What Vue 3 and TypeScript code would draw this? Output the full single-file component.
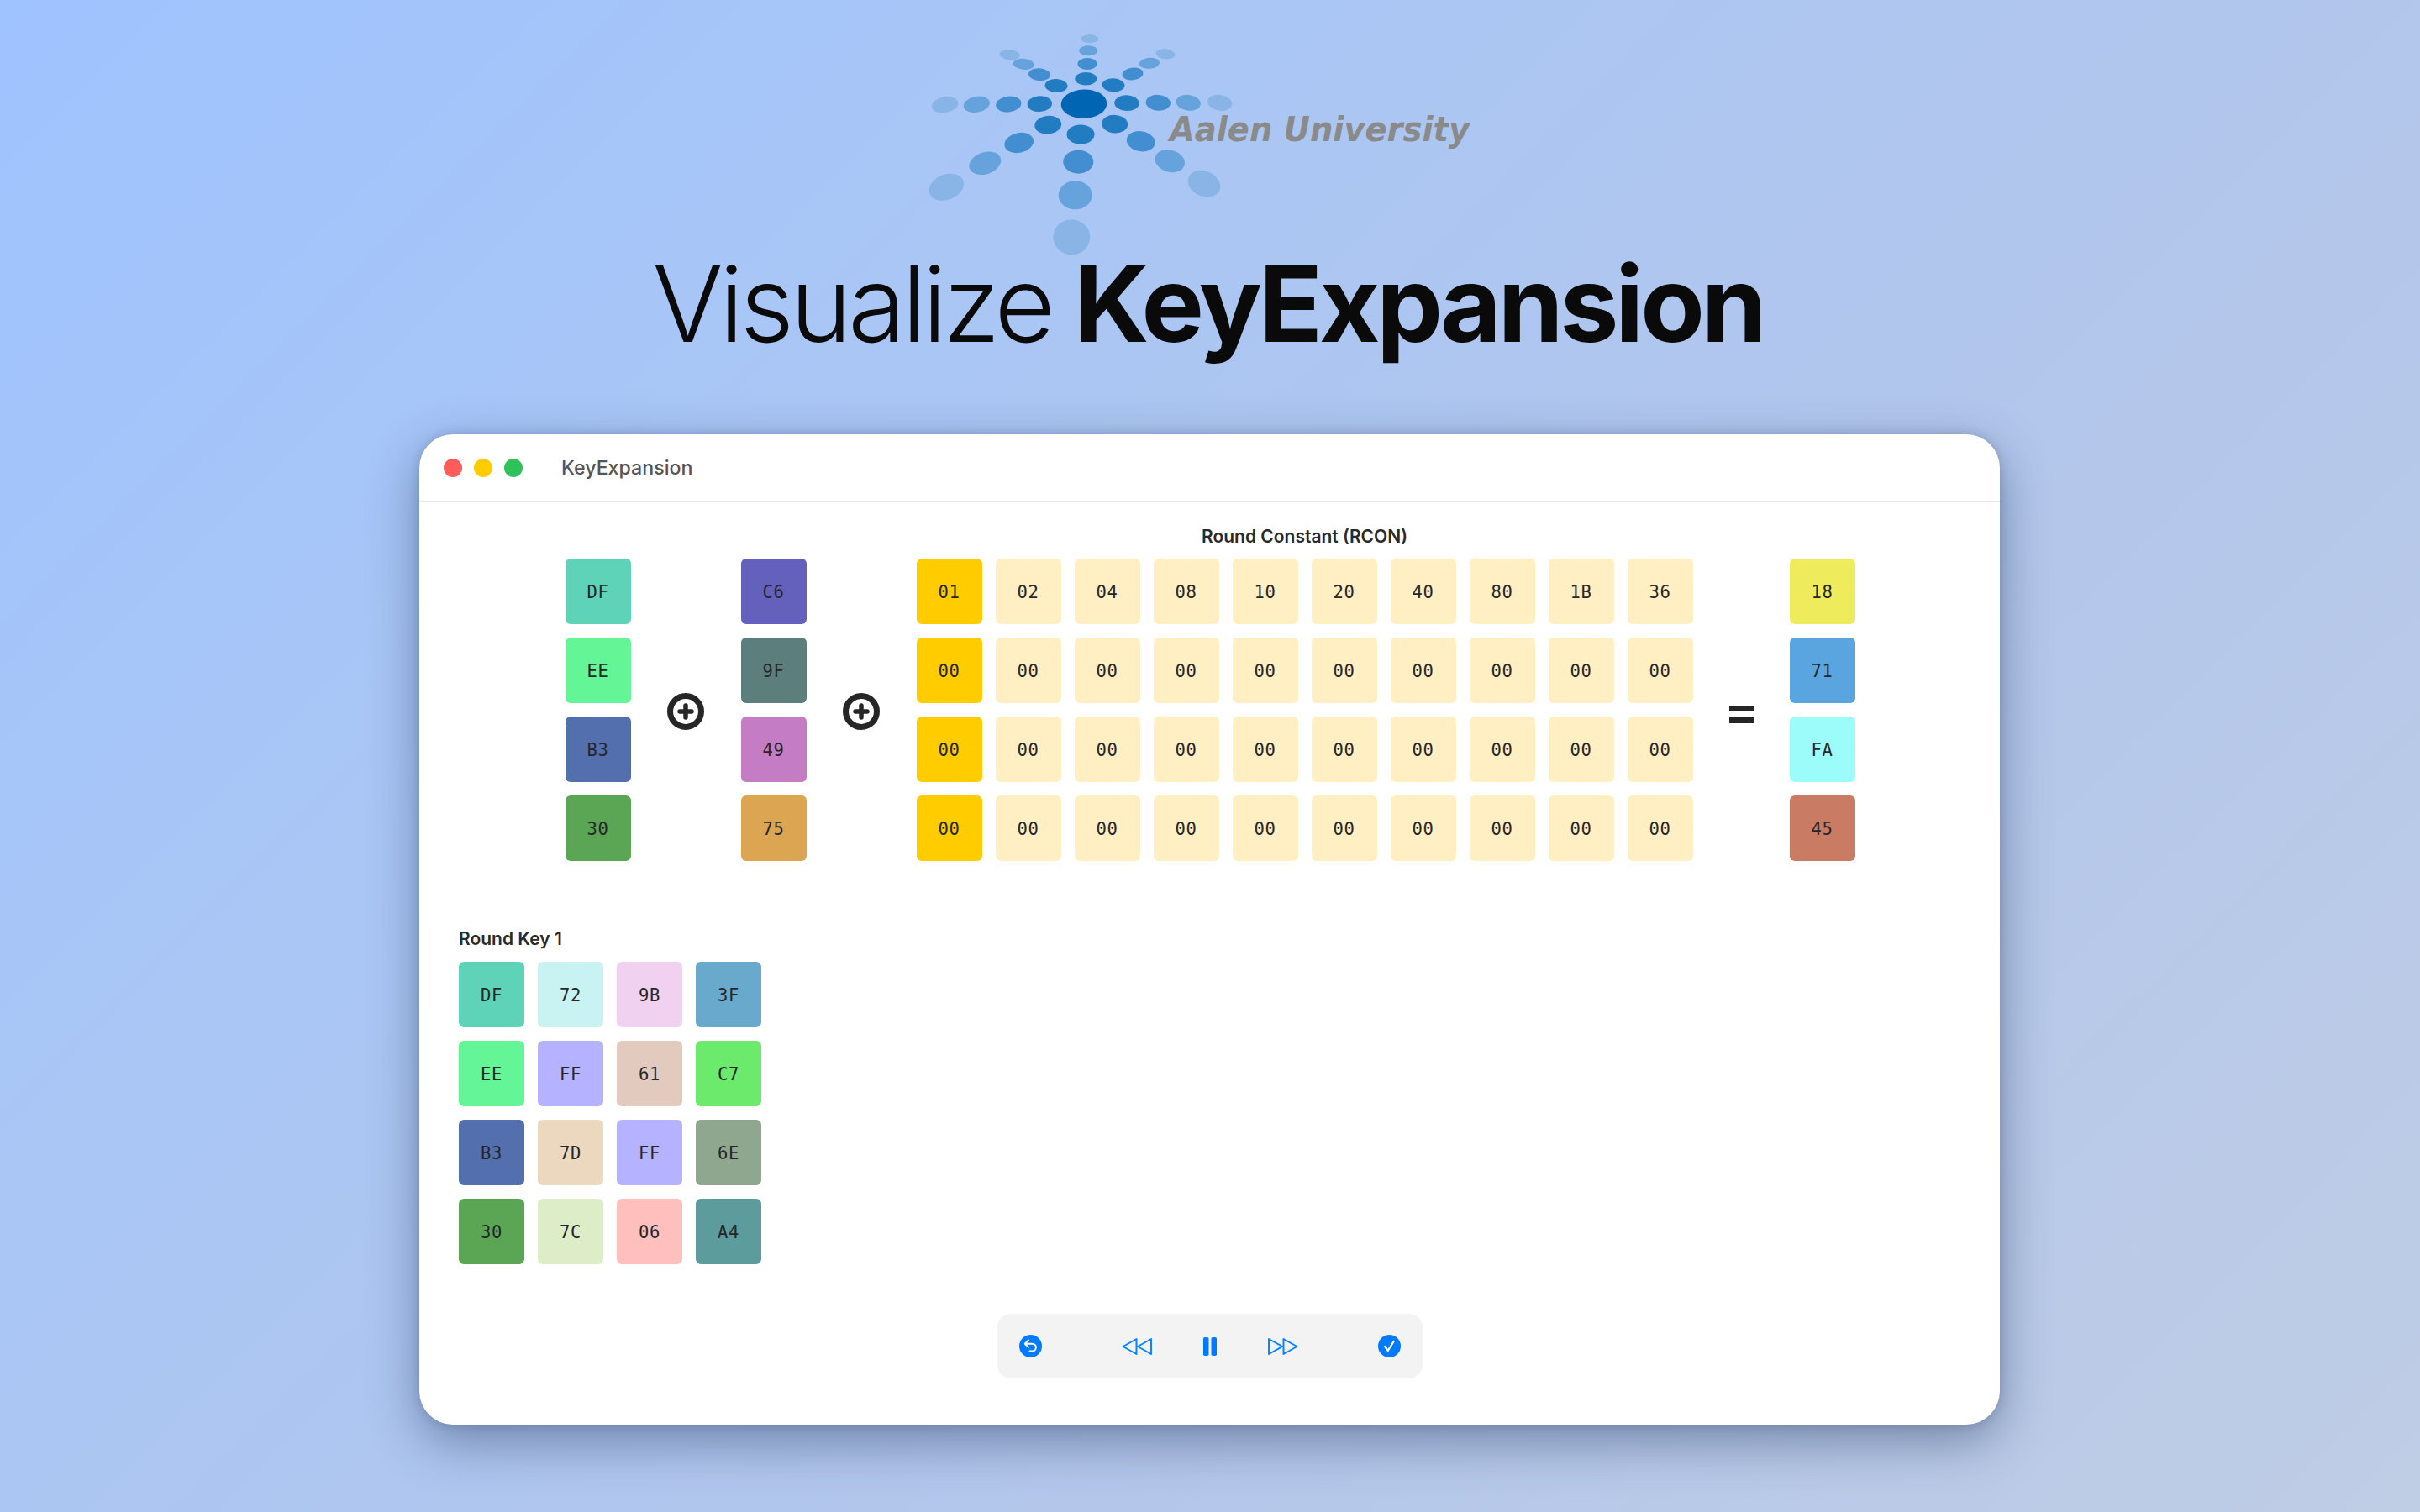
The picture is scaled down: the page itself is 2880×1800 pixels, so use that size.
<template>
  <div class="page">
    <svg class="logo" viewBox="1090 30 700 280" width="700" height="280">
      <ellipse
        v-for="(d, i) in dots"
        :key="i"
        :cx="d[0]"
        :cy="d[1]"
        :rx="d[2]"
        :ry="d[3]"
        :fill="levels[d[5]]"
        :transform="`rotate(${d[4]} ${d[0]} ${d[1]})`"
      />
      <text x="1392" y="168" textLength="357" lengthAdjust="spacingAndGlyphs" class="logo-text">Aalen University</text>
    </svg>
    <h1 class="headline">Visualize <b>KeyExpansion</b></h1>

    <div class="window">
      <div class="titlebar">
        <span class="light red"></span>
        <span class="light yellow"></span>
        <span class="light green"></span>
        <span class="title">KeyExpansion</span>
      </div>

      <div class="content">
        <div class="equation">
          <div class="grid single">
            <div v-for="c in wordA" :key="c[0]" class="cell" :style="{ background: c[1] }">{{ c[0] }}</div>
          </div>
          <div class="symbol">
            <svg width="44" height="44" viewBox="0 0 44 44">
              <circle cx="22" cy="22" r="18.5" fill="none" stroke="#262626" stroke-width="7" />
              <path d="M22 15v14M15 22h14" stroke="#262626" stroke-width="5.5" stroke-linecap="round" />
            </svg>
          </div>
          <div class="grid single">
            <div v-for="c in wordB" :key="c[0]" class="cell" :style="{ background: c[1] }">{{ c[0] }}</div>
          </div>
          <div class="symbol">
            <svg width="44" height="44" viewBox="0 0 44 44">
              <circle cx="22" cy="22" r="18.5" fill="none" stroke="#262626" stroke-width="7" />
              <path d="M22 15v14M15 22h14" stroke="#262626" stroke-width="5.5" stroke-linecap="round" />
            </svg>
          </div>
          <div class="rcon">
            <div class="label centered">Round Constant (RCON)</div>
            <div class="grid ten">
              <div
                v-for="(c, i) in rcon"
                :key="i"
                class="cell"
                :class="i % 10 === 0 ? 'active' : 'pale'"
              >{{ c }}</div>
            </div>
          </div>
          <div class="symbol equals">
            <span></span>
            <span></span>
          </div>
          <div class="grid single">
            <div v-for="c in result" :key="c[0]" class="cell" :style="{ background: c[1] }">{{ c[0] }}</div>
          </div>
        </div>

        <div class="round-key">
          <div class="label">Round Key 1</div>
          <div class="grid four">
            <div v-for="(c, i) in roundKey" :key="i" class="cell" :style="{ background: c[1] }">{{ c[0] }}</div>
          </div>
        </div>

        <div class="controls">
          <svg width="27" height="27" viewBox="0 0 27 27">
            <circle cx="13.5" cy="13.5" r="13.5" fill="#007aff" />
            <path d="M11 6.5L6.8 10.7L11 14.9M7 10.7H15.5a4.4 4.4 0 0 1 0 8.8H12.5" fill="none" stroke="#fff" stroke-width="2" stroke-linecap="round" stroke-linejoin="round" />
          </svg>
          <div class="transport">
            <svg width="36" height="22" viewBox="0 0 36 22">
              <path d="M17.5 2L1.5 11L17.5 20ZM35 2L19 11L35 20Z" fill="none" stroke="#0a84ff" stroke-width="2" stroke-linejoin="round" />
            </svg>
            <svg width="16" height="22" viewBox="0 0 16 22">
              <rect x="0" y="0" width="6.5" height="22" rx="1.8" fill="#007aff" />
              <rect x="9.5" y="0" width="6.5" height="22" rx="1.8" fill="#007aff" />
            </svg>
            <svg width="36" height="22" viewBox="0 0 36 22">
              <path d="M1 2L17 11L1 20ZM18.5 2L34.5 11L18.5 20Z" fill="none" stroke="#0a84ff" stroke-width="2" stroke-linejoin="round" />
            </svg>
          </div>
          <svg width="27" height="27" viewBox="0 0 27 27">
            <circle cx="13.5" cy="13.5" r="13.5" fill="#007aff" />
            <path d="M8.2 14L11.8 18.8L18.6 8" fill="none" stroke="#fff" stroke-width="2.2" stroke-linecap="round" stroke-linejoin="round" />
          </svg>
        </div>
      </div>
    </div>
  </div>
</template>

<script setup lang="ts">
type Cell = [string, string];

// cx, cy, rx, ry, rotation, shade
const dots: number[][] = [
  [1290, 123.7, 27.3, 17.2, -2, 0],
  [1292.3, 93.7, 13, 7.8, 0, 1],
  [1294, 76, 11.5, 7, 0, 2],
  [1295.3, 60.3, 11.2, 6, 0, 3],
  [1296.7, 46.3, 10.5, 5, 0, 4],
  [1257, 102, 13.5, 8, 2, 1],
  [1237, 88.7, 13, 7.4, 4, 2],
  [1218.3, 76.3, 12.5, 6.5, 5, 3],
  [1201.7, 65.3, 12, 6, 5, 4],
  [1325, 101.3, 13.5, 8, 3, 1],
  [1348, 88, 12.5, 7.4, -6, 2],
  [1368, 75.3, 12, 6.5, -5, 3],
  [1387, 64.3, 11.5, 6, 6, 4],
  [1237.3, 123.7, 14.7, 9.4, -3, 1],
  [1200.3, 124, 15.2, 9.4, -7, 2],
  [1162.3, 124.3, 15.7, 9.4, -10, 3],
  [1124.7, 124.7, 15.8, 9.4, -10, 4],
  [1341, 122.7, 14.7, 9.4, 2, 1],
  [1378.3, 122.3, 14.7, 9.4, 4, 2],
  [1414.3, 122.3, 14.7, 9.4, 8, 3],
  [1451.7, 122.3, 14.7, 9.4, 10, 4],
  [1247.3, 148.7, 16, 10.8, -6, 1],
  [1212.7, 170, 17.5, 11.8, -12, 2],
  [1172.3, 194.3, 19.5, 13, -18, 3],
  [1126.3, 222.7, 21.5, 15, -22, 4],
  [1286, 160, 16.5, 11.5, 0, 1],
  [1283.3, 192.7, 18, 14, 0, 2],
  [1279.7, 232.3, 20, 17, 0, 3],
  [1275.3, 282.3, 22, 21, 0, 4],
  [1326.7, 147.7, 15.5, 10.8, 4, 1],
  [1357.7, 168.3, 17, 12, 10, 2],
  [1392.3, 191.7, 18, 13, 16, 3],
  [1433, 218.7, 20, 15, 24, 4],
];
const levels = ["#0066b3", "#217cc2", "#428ed0", "#66a2dc", "#89b4e6"];

const wordA: Cell[] = [
  ["DF", "#5fd3b8"],
  ["EE", "#64f596"],
  ["B3", "#536fad"],
  ["30", "#5aa655"],
];
const wordB: Cell[] = [
  ["C6", "#6361bc"],
  ["9F", "#5c7f7e"],
  ["49", "#c47dc4"],
  ["75", "#dba551"],
];
const result: Cell[] = [
  ["18", "#eeec5c"],
  ["71", "#5aa5e0"],
  ["FA", "#9cfcfa"],
  ["45", "#c97c63"],
];
const rcon: string[] = [
  "01", "02", "04", "08", "10", "20", "40", "80", "1B", "36",
  ...Array(30).fill("00"),
];
const roundKey: Cell[] = [
  ["DF", "#5fd3b8"], ["72", "#c9f2f2"], ["9B", "#f0d1ef"], ["3F", "#69a9cc"],
  ["EE", "#64f596"], ["FF", "#b5b3ff"], ["61", "#e3cabe"], ["C7", "#6cea6c"],
  ["B3", "#536fad"], ["7D", "#ecd8bf"], ["FF", "#b5b3ff"], ["6E", "#8fa68f"],
  ["30", "#5aa655"], ["7C", "#dcedc8"], ["06", "#ffbfbd"], ["A4", "#5c9c9c"],
];
</script>

<style scoped>
.page {
  width: 2880px;
  height: 1800px;
  overflow: hidden;
  padding-top: 30px;
  box-sizing: border-box;
  display: flex;
  flex-direction: column;
  align-items: center;
  background: linear-gradient(135deg, #9fc3ff 0%, #a9c6f5 30%, #b2c6ec 60%, #bfcde5 100%);
  font-family: Inter, "Liberation Sans", sans-serif;
}
.logo {
  display: block;
  flex: none;
}
.logo-text {
  font-family: "DejaVu Sans", sans-serif;
  font-weight: 700;
  font-style: italic;
  font-size: 40px;
  fill: #8a8a8a;
}
.headline {
  margin: -28px 0 0 -5px;
  height: 235px;
  line-height: 160px;
  font-size: 125px;
  font-weight: 300;
  letter-spacing: -4.7px;
  word-spacing: -4px;
  color: #0a0a0a;
  white-space: pre;
}
.headline b {
  font-weight: 700;
  letter-spacing: -4.1px;
}
.window {
  width: 1881px;
  height: 1179px;
  flex: none;
  margin-right: 1px;
  background: #fff;
  border-radius: 40px;
  overflow: hidden;
  box-shadow: 0 20px 60px rgba(30, 50, 90, 0.45), 0 0 12px rgba(30, 50, 90, 0.2);
}
.titlebar {
  height: 80px;
  border-bottom: 1px solid #e8e8e8;
  display: flex;
  align-items: center;
  padding-left: 29px;
  gap: 14px;
}
.light {
  width: 22px;
  height: 22px;
  border-radius: 50%;
}
.red {
  background: #ff5c5c;
}
.yellow {
  background: #ffcc00;
}
.green {
  background: #2fc25a;
}
.title {
  margin-left: 32px;
  font-size: 23.2px;
  font-weight: 500;
  color: #555;
}
.content {
  padding: 28px 46px 0 47px;
}
.equation {
  display: flex;
  justify-content: center;
  align-items: flex-end;
}
.label {
  font-size: 21px;
  font-weight: 600;
  color: #2a2a2a;
  line-height: 26px;
}
.centered {
  text-align: center;
  margin-bottom: 13px;
}
.grid {
  display: grid;
  gap: 16px;
}
.single {
  grid-template-columns: 78px;
}
.ten {
  grid-template-columns: repeat(10, 78px);
}
.four {
  grid-template-columns: repeat(4, 78px);
  margin-top: 14px;
}
.cell {
  height: 78px;
  box-sizing: border-box;
  padding-top: 2px;
  border-radius: 6px;
  display: flex;
  align-items: center;
  justify-content: center;
  font-family: "DejaVu Sans Mono", monospace;
  font-size: 20.5px;
  letter-spacing: 0.6px;
  color: #26262a;
}
.active {
  background: #ffcc00;
}
.pale {
  background: #ffefc2;
}
.symbol {
  width: 131px;
  height: 356px;
  display: flex;
  align-items: center;
  justify-content: center;
}
.equals {
  width: 115px;
  flex-direction: column;
  gap: 7px;
  padding-top: 6px;
  box-sizing: border-box;
}
.equals span {
  display: block;
  width: 29px;
  height: 7px;
  background: #262626;
}
.round-key {
  margin-top: 80px;
}
.controls {
  width: 506px;
  height: 77px;
  box-sizing: border-box;
  margin: 59px auto 0;
  padding: 0 26px;
  border-radius: 16px;
  background: #f3f3f4;
  display: flex;
  align-items: center;
  justify-content: space-between;
}
.transport {
  display: flex;
  align-items: center;
  gap: 61px;
}
</style>
